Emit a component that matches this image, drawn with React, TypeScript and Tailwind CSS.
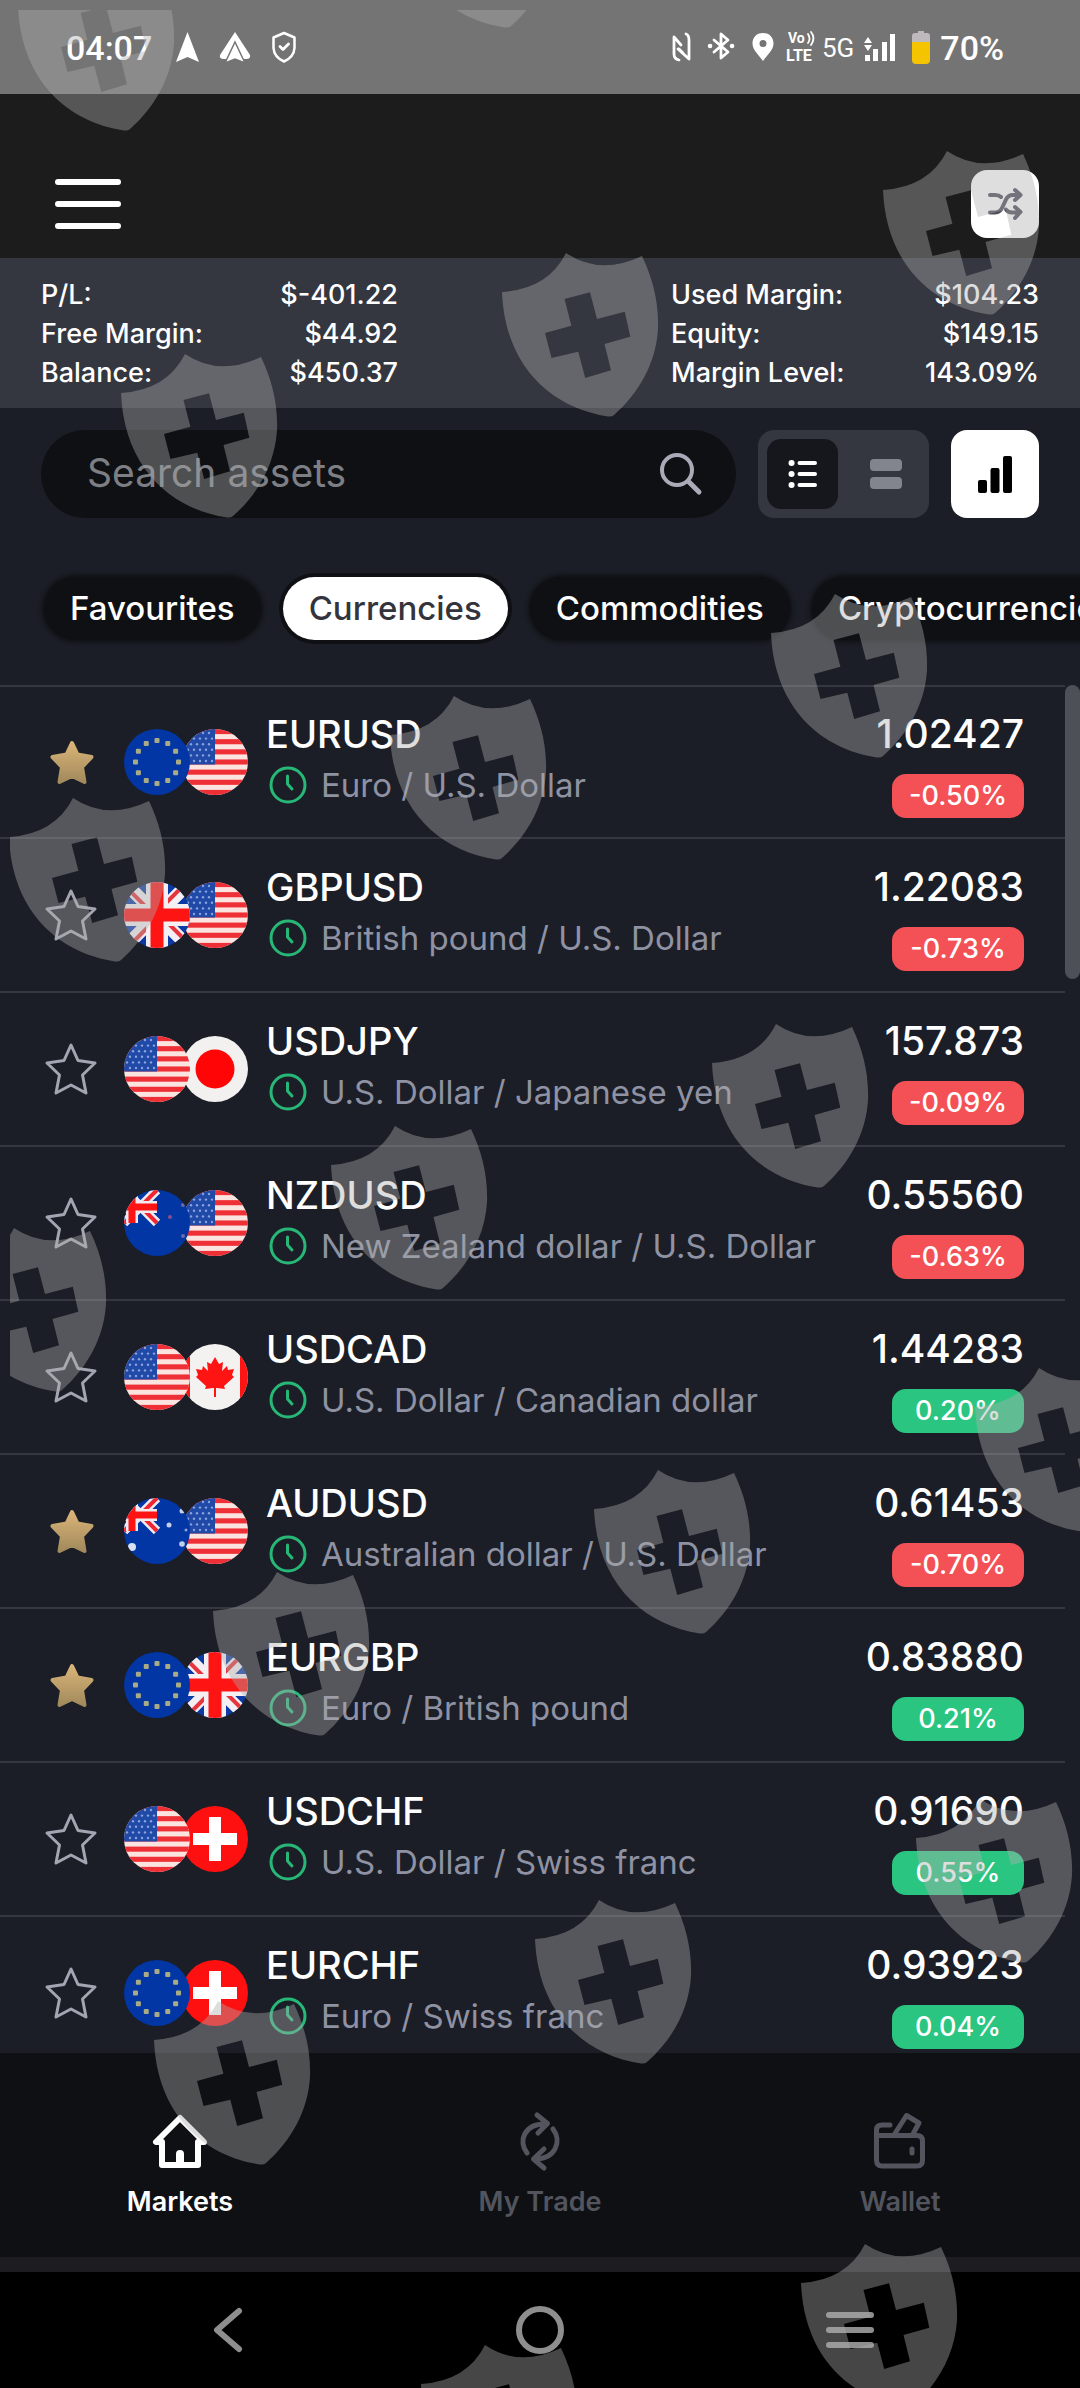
import { useState } from "react";
import type { ReactNode } from "react";

type Code = "EU" | "US" | "GB" | "JP" | "NZ" | "CA" | "AU" | "CH";

type Pair = {
  symbol: string;
  name: string;
  flags: [Code, Code];
  price: string;
  change: string;
  favourite: boolean;
};

const PAIRS: Pair[] = [
  { symbol: "EURUSD", name: "Euro / U.S. Dollar", flags: ["EU", "US"], price: "1.02427", change: "-0.50%", favourite: true },
  { symbol: "GBPUSD", name: "British pound / U.S. Dollar", flags: ["GB", "US"], price: "1.22083", change: "-0.73%", favourite: false },
  { symbol: "USDJPY", name: "U.S. Dollar / Japanese yen", flags: ["US", "JP"], price: "157.873", change: "-0.09%", favourite: false },
  { symbol: "NZDUSD", name: "New Zealand dollar / U.S. Dollar", flags: ["NZ", "US"], price: "0.55560", change: "-0.63%", favourite: false },
  { symbol: "USDCAD", name: "U.S. Dollar / Canadian dollar", flags: ["US", "CA"], price: "1.44283", change: "0.20%", favourite: false },
  { symbol: "AUDUSD", name: "Australian dollar / U.S. Dollar", flags: ["AU", "US"], price: "0.61453", change: "-0.70%", favourite: true },
  { symbol: "EURGBP", name: "Euro / British pound", flags: ["EU", "GB"], price: "0.83880", change: "0.21%", favourite: true },
  { symbol: "USDCHF", name: "U.S. Dollar / Swiss franc", flags: ["US", "CH"], price: "0.91690", change: "0.55%", favourite: false },
  { symbol: "EURCHF", name: "Euro / Swiss franc", flags: ["EU", "CH"], price: "0.93923", change: "0.04%", favourite: false },
];

const TABS = ["Favourites", "Currencies", "Commodities", "Cryptocurrencies"];

const SHIELDS: [number, number][] = [
  [18, -33], [399, -136], [883, 151], [502, 253], [121, 354],
  [771, 594], [390, 696], [9, 798], [712, 1024], [331, 1126], [-50, 1228],
  [975, 1368], [594, 1470], [213, 1572], [916, 1799], [535, 1900], [154, 2001],
  [801, 2244], [421, 2345],
];

/* ---------- flags, drawn on a 66 unit circle ---------- */

function UnionJack() {
  return (
    <>
      <rect width="66" height="66" fill="#0b3aa4" />
      <path d="M0 0 L66 66 M66 0 L0 66" stroke="#f4eff2" strokeWidth="13" />
      <path d="M0 3 L33 36 M66 -3 L33 30 M66 63 L33 30 M0 69 L33 36" stroke="#e8343c" strokeWidth="4" />
      <path d="M33 0 V66 M0 33 H66" stroke="#f4eff2" strokeWidth="22" />
      <path d="M33 0 V66 M0 33 H66" stroke="#ff1414" strokeWidth="13" />
    </>
  );
}

function Canton() {
  return (
    <>
      <rect width="33" height="33" fill="#0037a5" />
      <path d="M0 0 L33 33 M33 0 L0 33" stroke="#f0eaf0" strokeWidth="9" />
      <path d="M0 0 L33 33 M33 0 L0 33" stroke="#f02530" strokeWidth="4" />
      <path d="M8 0 V33 M0 17 H33" stroke="#f0eaf0" strokeWidth="12" />
      <path d="M8 0 V33 M0 17 H33" stroke="#ff1414" strokeWidth="7" />
    </>
  );
}

function FlagArt({ code }: { code: Code }) {
  switch (code) {
    case "EU":
      return (
        <>
          <rect width="66" height="66" fill="#0236a5" />
          {Array.from({ length: 12 }, (_, i) => {
            const a = (i * Math.PI) / 6;
            return (
              <rect key={i} x={33 + Math.sin(a) * 21.5 - 2.5} y={33 - Math.cos(a) * 21.5 - 2.5} width="5" height="5" rx="1" fill="#a9ab84" />
            );
          })}
        </>
      );
    case "US":
      return (
        <>
          <rect width="66" height="66" fill="#fbe3df" />
          {Array.from({ length: 7 }, (_, i) => (
            <rect key={i} y={i * 10.15} width="66" height="5.1" fill="#ee2f35" />
          ))}
          <rect width="33" height="35.5" fill="#2149a8" />
          {Array.from({ length: 30 }, (_, i) => (
            <circle key={i} cx={3 + (i % 5) * 6 + (Math.floor(i / 5) % 2) * 3} cy={4 + Math.floor(i / 5) * 5.6} r="1.2" fill="#8aa4dc" />
          ))}
        </>
      );
    case "GB":
      return <UnionJack />;
    case "JP":
      return (
        <>
          <rect width="66" height="66" fill="#f3f1f0" />
          <circle cx="33" cy="33" r="19.5" fill="#ff0505" />
        </>
      );
    case "NZ":
      return (
        <>
          <rect width="66" height="66" fill="#0236a5" />
          <Canton />
          <circle cx="46" cy="27" r="2" fill="#8a4f86" />
          <circle cx="59" cy="15" r="2" fill="#6f6aa0" />
          <circle cx="59" cy="46" r="2" fill="#6f6aa0" />
        </>
      );
    case "AU":
      return (
        <>
          <rect width="66" height="66" fill="#0236a5" />
          <Canton />
          <circle cx="8" cy="49" r="4" fill="#d8e0f2" />
          <circle cx="45" cy="27" r="2.5" fill="#c3cfea" />
          <circle cx="58" cy="13" r="2.5" fill="#c3cfea" />
          <circle cx="58" cy="46" r="2.8" fill="#c3cfea" />
          <circle cx="62" cy="32" r="1.5" fill="#8fa2d4" />
        </>
      );
    case "CA":
      return (
        <>
          <rect width="66" height="66" fill="#f4f1f1" />
          <rect width="8" height="66" fill="#ff1414" />
          <rect x="58" width="8" height="66" fill="#ff1414" />
          <path d="M33 13 l4 7 4-2 -1 9 5-5 1 4 6-1 -2 6 2 2 -10 9 1 3 -8 -1 -1 0 0 9 h-2 l0-9 -1 0 -8 1 1-3 -10-9 2-2 -2-6 6 1 1-4 5 5 -1-9 4 2z" fill="#ff1414" />
        </>
      );
    case "CH":
      return (
        <>
          <rect width="66" height="66" fill="#ff1010" />
          <path d="M27 11 h12 v16 h16 v12 h-16 v16 h-12 v-16 h-16 v-12 h16z" fill="#fff" />
        </>
      );
  }
}

function Flag({ code, className }: { code: Code; className: string }) {
  return (
    <svg viewBox="0 0 66 66" className={`size-[66px] rounded-full ${className}`} aria-hidden="true">
      <FlagArt code={code} />
    </svg>
  );
}

/* ---------- small icons ---------- */

const STAR = "M27 3 L34 18.5 L51 21 L38.5 33 L42 51 L27 43 L12 51 L15.5 33 L3 21 L20 18.5 Z";

function Star({ filled }: { filled: boolean }) {
  return filled ? (
    <svg viewBox="0 0 54 54" className="size-[54px]" aria-hidden="true">
      <defs>
        <linearGradient id="gold" x1="0" y1="0" x2="0" y2="1">
          <stop offset="0" stopColor="#d9b478" />
          <stop offset="1" stopColor="#a28a5c" />
        </linearGradient>
      </defs>
      <path
        d="M28 8 L33.5 19.5 L47.5 22 L38 32 L40.5 47 L28 41 L15.5 47 L18 32 L8.5 22 L22.5 19.5 Z"
        fill="url(#gold)"
        stroke="url(#gold)"
        strokeWidth="4"
        strokeLinejoin="round"
      />
    </svg>
  ) : (
    <svg viewBox="0 0 54 54" className="size-[54px]" fill="none" stroke="#a3a6b2" strokeWidth="3" strokeLinejoin="round" aria-hidden="true">
      <path d={STAR} />
    </svg>
  );
}

function Clock() {
  return (
    <svg viewBox="0 0 38 38" className="size-[38px]" fill="none" stroke="#27b877" strokeWidth="3" strokeLinecap="round" strokeLinejoin="round" aria-hidden="true">
      <circle cx="19" cy="19" r="17" />
      <path d="M18.5 10 V18 L23 23" />
    </svg>
  );
}

function StatusBar() {
  return (
    <div className="flex h-[94px] items-center bg-[#747474] pt-[2px] pr-[76px] pl-[66px] font-['Roboto',sans-serif] text-[34px] font-medium text-white">
      <span>04:07</span>
      <svg viewBox="0 0 122 34" className="ml-[22px] h-[34px] w-[122px]" aria-hidden="true">
        <path d="M13.5 1 L25 31 L13.5 26 L2 31 Z" fill="#fff" />
        <path d="M61 1 L76 24 Q77 28 72 28 L69.5 28 L61 14 L52.5 28 L50 28 Q45 28 46 24 Z" fill="#fff" />
        <path d="M61 11 L71 32 L61 28 L51 32 Z" fill="#fff" stroke="#747474" strokeWidth="1.5" />
        <path d="M110 2 L120.5 6.5 V17 Q120 26 110 30.5 Q100 26 99.5 17 V6.5 Z" fill="none" stroke="#fff" strokeWidth="2.5" strokeLinejoin="round" />
        <path d="M106 15.5 L109 18.5 L114.5 13" fill="none" stroke="#fff" strokeWidth="2.8" strokeLinecap="round" strokeLinejoin="round" />
      </svg>
      <svg viewBox="0 0 148 36" className="ml-auto h-[36px] w-[148px]" fill="none" stroke="#fff" strokeWidth="3" strokeLinejoin="round" strokeLinecap="round" aria-hidden="true">
        <path d="M9 30 Q4 29 4 24 V7 L11 15 M8 19 L19 29 V10 Q19 5 16 4 M9 19 L13 23" strokeWidth="2.8" />
        <path d="M44 10 L58 22 L51 28 V4 L58 10 L44 22" strokeWidth="2.8" />
        <path d="M40 16 h0.1 M62 16 h0.1" strokeWidth="4.5" />
        <path d="M93 3 C86 3 82.5 8 82.5 13.5 C82.5 20 88 24 93 31 C98 24 103.5 20 103.5 13.5 C103.5 8 100 3 93 3 Z M93 10 a3.5 3.5 0 1 1 0 7 a3.5 3.5 0 1 1 0 -7 Z" fill="#fff" fillRule="evenodd" stroke="none" />
        <text x="118" y="13" className="text-[14px] font-bold" fill="#fff" stroke="none">Vo</text>
        <text x="116" y="31" className="text-[16px] font-bold" fill="#fff" stroke="none">LTE</text>
        <path d="M138 4 Q141 9 138 13 M141 2 Q146 8 141 15" strokeWidth="1.8" />
      </svg>
      <span className="ml-1 text-[26px] font-normal">5G</span>
      <svg viewBox="0 0 34 34" className="ml-2 h-[34px] w-[34px]" fill="#fff" aria-hidden="true">
        <path d="M6 6 L10 12 H2 Z M6 20 L10 14 H2 Z" />
        <rect x="3" y="24" width="5" height="6" />
        <rect x="11" y="18" width="5" height="12" />
        <rect x="20" y="11" width="5" height="19" />
        <rect x="28" y="3" width="5" height="27" />
      </svg>
      <svg viewBox="0 0 18 34" className="mr-[10px] ml-4 h-[34px] w-[18px]" aria-hidden="true">
        <path d="M6 0 h6 v2 h3 q3 0 3 3 v7 H0 V5 q0 -3 3 -3 h3 Z" fill="#bdb9bd" />
        <path d="M0 11 H18 V29 q0 4 -4 4 H4 q-4 0 -4 -4 Z" fill="#f5c400" />
      </svg>
      <span>70%</span>
    </div>
  );
}

function Header() {
  return (
    <header className="flex h-[164px] items-center justify-between bg-[#1c1c1c] pt-[56px] pr-[41px] pl-[55px]">
      <button aria-label="Menu" className="flex w-[66px] flex-col gap-4">
        <span className="h-[6px] rounded-full bg-white" />
        <span className="h-[6px] rounded-full bg-white" />
        <span className="h-[6px] rounded-full bg-white" />
      </button>
      <button aria-label="Shuffle" className="flex size-[68px] items-center justify-center rounded-[16px] bg-white">
        <svg viewBox="0 0 36 36" className="size-[36px]" fill="none" stroke="#4e4a5a" strokeWidth="4" strokeLinecap="round" strokeLinejoin="round" aria-hidden="true">
          <path d="M3 9 H8 Q12 9 14 11 M3 26.5 H8 Q13 26.5 15.5 21 L19 13.5 Q21 9 26 9 H33 M28 4 L33.5 9 L28 14 M19 23.5 Q21 26.5 25 26.5 H33 M28 21 L33.5 26 L28 32" />
        </svg>
      </button>
    </header>
  );
}

function Stats({ rows, className }: { rows: [string, string][]; className: string }) {
  return (
    <dl className={`flex flex-col ${className}`}>
      {rows.map(([label, value]) => (
        <div key={label} className="flex justify-between">
          <dt>{label}</dt>
          <dd>{value}</dd>
        </div>
      ))}
    </dl>
  );
}

function Account() {
  return (
    <section className="flex justify-between bg-[#343740] px-[41px] pt-[17px] pb-[16px] text-[27px] leading-[39px] font-medium text-white">
      <Stats className="w-[357px]" rows={[["P/L:", "$-401.22"], ["Free Margin:", "$44.92"], ["Balance:", "$450.37"]]} />
      <Stats className="w-[368px]" rows={[["Used Margin:", "$104.23"], ["Equity:", "$149.15"], ["Margin Level:", "143.09%"]]} />
    </section>
  );
}

function Toolbar() {
  return (
    <div className="flex h-[88px] gap-[22px] px-[41px]">
      <div className="flex min-w-0 flex-1 items-center rounded-full bg-[#0f1014] pr-[33px] pl-[46px]">
        <input
          aria-label="Search assets"
          placeholder="Search assets"
          className="min-w-0 flex-1 bg-transparent pb-[2px] text-[39px] text-white outline-none placeholder:text-[#7d7f85]"
        />
        <button aria-label="Search">
          <svg viewBox="0 0 44 44" className="size-[44px]" fill="none" stroke="#a9abb9" strokeLinecap="round" aria-hidden="true">
            <circle cx="18" cy="18" r="15" strokeWidth="4" />
            <path d="M30 30 L40 40" strokeWidth="5" />
          </svg>
        </button>
      </div>
      <div className="flex rounded-[16px] bg-[#343740] p-[9px]">
        <button aria-label="List view" aria-pressed="true" className="flex w-[71px] items-center justify-center rounded-[14px] bg-[#15171d]">
          <svg viewBox="0 0 30 30" className="size-[30px]" stroke="#fff" strokeWidth="4" strokeLinecap="round" aria-hidden="true">
            <path d="M11.5 4 H27 M11.5 15 H27 M11.5 26 H27" />
            <path d="M3.5 4 h0.1 M3.5 15 h0.1 M3.5 26 h0.1" strokeWidth="6" />
          </svg>
        </button>
        <button aria-label="Card view" className="flex w-[82px] flex-col items-center justify-center gap-[6px] pl-[14px]">
          <span className="h-[12px] w-[32px] rounded-[4px] bg-[#83858e]" />
          <span className="h-[12px] w-[32px] rounded-[4px] bg-[#83858e]" />
        </button>
      </div>
      <button aria-label="Charts" className="flex w-[88px] items-center justify-center rounded-[16px] bg-white">
        <svg viewBox="0 0 34 38" className="h-[38px] w-[34px]" aria-hidden="true">
          <rect x="0" y="25" width="9" height="13" rx="2" />
          <rect x="12.5" y="13" width="9" height="25" rx="2" />
          <rect x="25" y="1" width="9" height="37" rx="2" />
        </svg>
      </button>
    </div>
  );
}

function Tabs() {
  const [active, setActive] = useState("Currencies");
  return (
    <div className="flex gap-[22px] overflow-hidden pt-[59px] pb-[45px] pl-[44px] text-[33px] leading-[63px]">
      {TABS.map((tab) => (
        <button
          key={tab}
          onClick={() => setActive(tab)}
          className={
            tab === active
              ? "shrink-0 rounded-full bg-white px-[26px] font-medium text-[#34353c] shadow-[0_0_0_4px_#0f1014]"
              : "shrink-0 rounded-full bg-[#0f1014] px-[26px] font-medium text-white shadow-[0_0_4px_2px_#0f1014]"
          }
        >
          {tab}
        </button>
      ))}
    </div>
  );
}

function Row({ pair }: { pair: Pair }) {
  const [favourite, setFavourite] = useState(pair.favourite);
  const badge = pair.change.startsWith("-") ? "bg-[#f45156]" : "bg-[#2ac681]";
  return (
    <li className="flex h-[154px] items-center border-b-2 border-[#343740] pr-[41px] pl-11 first:border-t-2">
      <button aria-label={`Favourite ${pair.symbol}`} aria-pressed={favourite} onClick={() => setFavourite(!favourite)}>
        <Star filled={favourite} />
      </button>
      <div className="ml-[26px] flex">
        <Flag code={pair.flags[0]} className="z-10" />
        <Flag code={pair.flags[1]} className="-ml-2" />
      </div>
      <div className="ml-[18px] flex min-w-0 flex-1 flex-col gap-[10px] pb-2">
        <h2 className="text-[38px] leading-[44px] font-medium text-white">{pair.symbol}</h2>
        <p className="flex items-center gap-[14px] pl-[3px] text-[33px] leading-[38px] whitespace-nowrap text-[#8f92a3]">
          <Clock />
          {pair.name}
        </p>
      </div>
      <div className="flex flex-col items-end gap-[18px] pt-[6px]">
        <span className="text-[39px] leading-[44px] font-medium text-white">{pair.price}</span>
        <span className={`w-[132px] rounded-[14px] text-center text-[27px] leading-[44px] font-medium text-white ${badge}`}>{pair.change}</span>
      </div>
    </li>
  );
}

function NavItem({ label, current, children }: { label: string; current?: boolean; children: ReactNode }) {
  return (
    <a
      href={`#${label}`}
      className={`flex flex-1 flex-col items-center gap-2 pt-[57px] text-[27px] leading-[40px] font-semibold ${current ? "text-white" : "text-[#53555e]"}`}
    >
      <svg viewBox="0 0 60 64" className="h-[64px] w-[60px]" fill="none" stroke="currentColor" strokeWidth="5" strokeLinecap="round" strokeLinejoin="round" aria-hidden="true">
        {children}
      </svg>
      {label}
    </a>
  );
}

function BottomNav() {
  return (
    <nav className="flex h-[219px] border-b-[15px] border-[#1d1c21] bg-[#0f1014]">
      <NavItem label="Markets" current>
        <path d="M30 8 L6 32 H12 V55 H48 V32 H54 Z" strokeWidth="6" />
        <path d="M30 44 V52" strokeWidth="8" />
      </NavItem>
      <NavItem label="My Trade">
        <path d="M17 43 C8 31 14 14 35 14 M27 5 L37.5 13.5 L28 23 M43 19 C52 31 46 49 25 49 M34 39 L23.5 49 L34 58" />
      </NavItem>
      <NavItem label="Wallet">
        <path d="M20 15 H12 Q6.5 15 6.5 20 V50 Q6.5 56 12 56 H47 Q52.5 56 52.5 50 V31 Q52.5 25.5 47 25.5 H7 M24 25 L36.5 5.5 L49 13 L43 24" />
        <path d="M42 39 V43" strokeWidth="5" />
      </NavItem>
    </nav>
  );
}

function SystemNav() {
  return (
    <div className="grid h-[116px] grid-cols-3 items-center bg-black">
      <button aria-label="Back" className="flex justify-center pl-[96px]">
        <svg viewBox="0 0 32 48" className="h-[48px] w-[32px]" fill="none" stroke="#8e8e8e" strokeWidth="6" strokeLinecap="round" strokeLinejoin="round" aria-hidden="true">
          <path d="M27 5 L5 24 L27 43" />
        </svg>
      </button>
      <button aria-label="Home" className="mx-auto size-[48px] rounded-full border-[6px] border-[#8e8e8e]" />
      <button aria-label="Recent apps" className="mx-auto flex w-[148px] flex-col gap-[9px] pr-[100px]">
        <span className="h-[6px] rounded-full bg-[#8e8e8e]" />
        <span className="h-[6px] rounded-full bg-[#8e8e8e]" />
        <span className="h-[6px] rounded-full bg-[#8e8e8e]" />
      </button>
    </div>
  );
}

function Watermark() {
  return (
    <svg
      viewBox="0 0 1080 2388"
      preserveAspectRatio="xMidYMin slice"
      className="pointer-events-none absolute inset-0 z-20 h-full w-full"
      fill="#adadad"
      fillOpacity="0.404"
      aria-hidden="true"
    >
      <defs>
        <clipPath id="area">
          <rect x="10" y="10" width="1070" height="2378" />
        </clipPath>
      </defs>
      <g clipPath="url(#area)">
        {SHIELDS.map(([x, y]) => (
          <path
            key={`${x},${y}`}
            transform={`translate(${x} ${y})`}
            fillRule="evenodd"
            d="M64 0 Q98 23 140 3 C150 24 157 48 156 76 C154 110 137 140 112 162 Q110 164 106 163.5 C50 155 3 114 0 39 Q46 36 64 0 Z M62.5 46 L88 39.3 L95 66 L122.8 58.7 L128.3 83.7 L102.5 91 L109 117.3 L83.2 125 L76.3 98.7 L49.5 105 L43 80 L69.4 72.7 Z"
          />
        ))}
      </g>
    </svg>
  );
}

export default function App() {
  return (
    <div className="relative flex h-screen flex-col overflow-hidden bg-[#1b1e26] font-['Inter',sans-serif]">
      <StatusBar />
      <Header />
      <Account />
      <main className="flex min-h-0 flex-1 flex-col pt-[22px]">
        <Toolbar />
        <Tabs />
        <div className="flex min-h-0 flex-1">
          <ul className="min-w-0 flex-1 overflow-hidden">
            {PAIRS.map((pair) => (
              <Row key={pair.symbol} pair={pair} />
            ))}
          </ul>
          <div className="w-[15px]">
            <div className="h-[294px] rounded-full bg-[#4d5157]" />
          </div>
        </div>
      </main>
      <BottomNav />
      <SystemNav />
      <Watermark />
    </div>
  );
}
